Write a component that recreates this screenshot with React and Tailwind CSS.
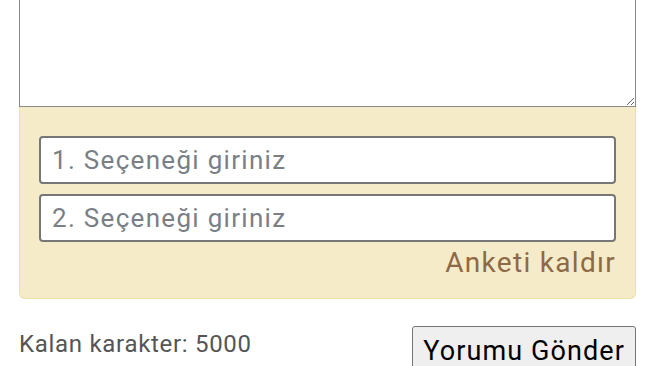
import React from 'react';

export default function App() {
  return (
    <div className="w-[654px] h-[366px] overflow-hidden bg-white font-['Roboto',sans-serif]">
      <div className="ml-[19px] w-[617px]">
        {/* comment box */}
        <textarea
          className="block w-[617px] h-[127px] -mt-[20px] border border-[#8a8a8a] bg-white resize-y outline-none"
        />

        {/* poll panel */}
        <div className="bg-[#f5ebc9] border border-t-0 border-[#eee0ab] rounded-b-[6px] pt-[29px] pb-[17px] px-[19px] flex flex-col gap-[10px]">
          <input
            placeholder="1. Seçeneği giriniz"
            className="h-[48px] w-full bg-white border-2 border-[#777] rounded-[4px] px-[11px] text-[26px] tracking-[1.3px] text-[#333] placeholder:text-[#7a7f86] outline-none"
          />
          <input
            placeholder="2. Seçeneği giriniz"
            className="h-[48px] w-full bg-white border-2 border-[#777] rounded-[4px] px-[11px] text-[26px] tracking-[1.3px] text-[#333] placeholder:text-[#7a7f86] outline-none"
          />
          <div className="flex justify-end -mt-[7px]">
            <span className="text-[28px] leading-[36px] tracking-[1.3px] text-[#8d6a45]">Anketi kaldır</span>
          </div>
        </div>

        {/* footer */}
        <div className="flex justify-between items-start mt-[27px]">
          <span className="mt-[3px] text-[24px] leading-[30px] tracking-[0.7px] text-[#555]">Kalan karakter: 5000</span>
          <button className="h-[50px] px-[10px] bg-[#efefef] border border-[#767676] rounded-[3px] text-[27px] tracking-[1.1px] text-black">
            Yorumu Gönder
          </button>
        </div>
      </div>
    </div>
  );
}
